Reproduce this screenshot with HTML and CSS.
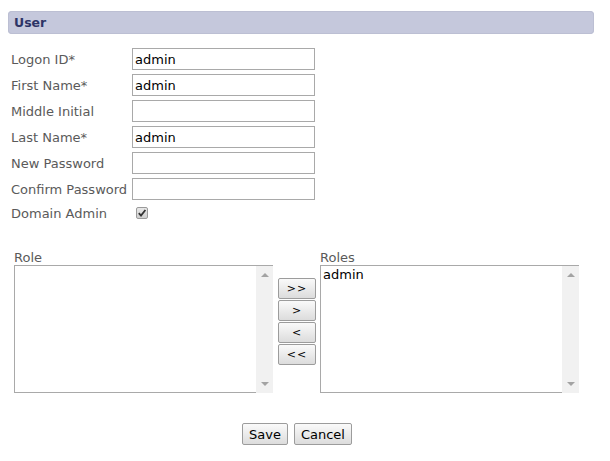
FILE: index.html
```html
<!DOCTYPE html>
<html>
<head>
<meta charset="utf-8">
<link rel="stylesheet" href="styles.css">
</head>
<body>
<div class="panel">
  <div class="header">User</div>
  <div class="form">
    <div class="row"><label>Logon ID*</label><input class="field" type="text" value="admin"></div>
    <div class="row"><label>First Name*</label><input class="field" type="text" value="admin"></div>
    <div class="row"><label>Middle Initial</label><input class="field" type="text" value=""></div>
    <div class="row"><label>Last Name*</label><input class="field" type="text" value="admin"></div>
    <div class="row"><label>New Password</label><input class="field" type="password" value=""></div>
    <div class="row"><label>Confirm Password</label><input class="field" type="password" value=""></div>
    <div class="row row-check"><label>Domain Admin</label>
      <span class="check"><svg width="10" height="10" viewBox="0 0 10 10"><path d="M1.8 5.2 L4 7.6 L8.4 2" fill="none" stroke="#333" stroke-width="1.8"/></svg></span>
    </div>
  </div>
  <div class="lists">
    <div class="col">
      <div class="list-label">Role</div>
      <div class="listbox">
        <div class="items"></div>
        <div class="scrollbar"><span class="arrow-up"></span><span class="arrow-down"></span></div>
      </div>
    </div>
    <div class="movers">
      <button class="btn mover">&gt;&gt;</button>
      <button class="btn mover">&gt;</button>
      <button class="btn mover">&lt;</button>
      <button class="btn mover">&lt;&lt;</button>
    </div>
    <div class="col">
      <div class="list-label">Roles</div>
      <div class="listbox">
        <div class="items"><div class="item">admin</div></div>
        <div class="scrollbar"><span class="arrow-up"></span><span class="arrow-down"></span></div>
      </div>
    </div>
  </div>
  <div class="actions">
    <button class="btn action">Save</button>
    <button class="btn action">Cancel</button>
  </div>
</div>
</body>
</html>
```
FILE: styles.css
```css
html, body {
  margin: 0;
  padding: 0;
  background: #fff;
}
body {
  font-family: "DejaVu Sans", Verdana, sans-serif;
  font-size: 13px;
  color: #555;
}
.panel {
  padding: 11px 16px 0 8px;
}
.header {
  height: 23px;
  line-height: 23px;
  border-radius: 4px;
  background: #c5c8dc;
  box-shadow: inset 0 0 0 1px #bcbfd3;
  padding-left: 6px;
  font-weight: bold;
  font-size: 12.5px;
  color: #2d3466;
}
.form {
  margin-top: 14px;
  padding-left: 3px;
}
.row {
  display: grid;
  grid-template-columns: 121px 183px;
  align-items: center;
  height: 22px;
  margin-bottom: 4px;
}
.row label {
  color: #5a5a5a;
  white-space: nowrap;
}
.field {
  box-sizing: border-box;
  width: 183px;
  height: 22px;
  margin: 0;
  border: 1px solid #a9a9a9;
  padding: 0 2px;
  font-family: "DejaVu Sans", Verdana, sans-serif;
  font-size: 13px;
  color: #000;
  outline: none;
}
.row-check {
  height: 18px;
}
.check {
  box-sizing: border-box;
  width: 12px;
  height: 12px;
  margin-left: 4px;
  border: 1px solid #9a9a9a;
  border-radius: 2px;
  background: linear-gradient(#e8e8e8, #cfcfcf);
  display: flex;
  align-items: center;
  justify-content: center;
}
.check svg {
  display: block;
}
.lists {
  display: flex;
  margin-top: 28px;
  margin-left: 6px;
  align-items: flex-start;
}
.col {
  display: flex;
  flex-direction: column;
}
.list-label {
  height: 15px;
  line-height: 15px;
  color: #5a5a5a;
}
.listbox {
  display: flex;
  width: 259px;
  height: 128px;
  box-sizing: border-box;
  border-top: 1px solid #a9a9a9;
}
.items {
  flex: 1;
  border-left: 1px solid #a9a9a9;
  border-bottom: 1px solid #a9a9a9;
  padding: 1px 2px;
}
.item {
  font-size: 13px;
  color: #000;
  line-height: 16px;
}
.scrollbar {
  width: 17px;
  background: #f1f1f1;
  position: relative;
}
.arrow-up, .arrow-down {
  position: absolute;
  left: 5px;
  width: 0;
  height: 0;
  border-left: 4px solid transparent;
  border-right: 4px solid transparent;
}
.arrow-up {
  top: 7px;
  border-bottom: 4px solid #a3a3a3;
}
.arrow-down {
  bottom: 7px;
  border-top: 4px solid #a3a3a3;
}
.movers {
  display: flex;
  flex-direction: column;
  gap: 1px;
  margin-top: 28px;
  margin-left: 5px;
  margin-right: 4px;
}
.btn {
  box-sizing: border-box;
  border: 1px solid #9c9c9c;
  border-radius: 2px;
  background: linear-gradient(#fafafa, #dcdcdc);
  font-family: "DejaVu Sans", Verdana, sans-serif;
  font-size: 13px;
  color: #000;
  padding: 0;
  margin: 0;
  cursor: default;
}
.mover {
  width: 38px;
  height: 21px;
  font-size: 11px;
  line-height: 19px;
  letter-spacing: 1px;
}
.actions {
  display: flex;
  justify-content: center;
  gap: 6px;
  margin-top: 30px;
  padding-right: 8px;
}
.action {
  height: 22px;
  padding: 0 6px;
}
```
